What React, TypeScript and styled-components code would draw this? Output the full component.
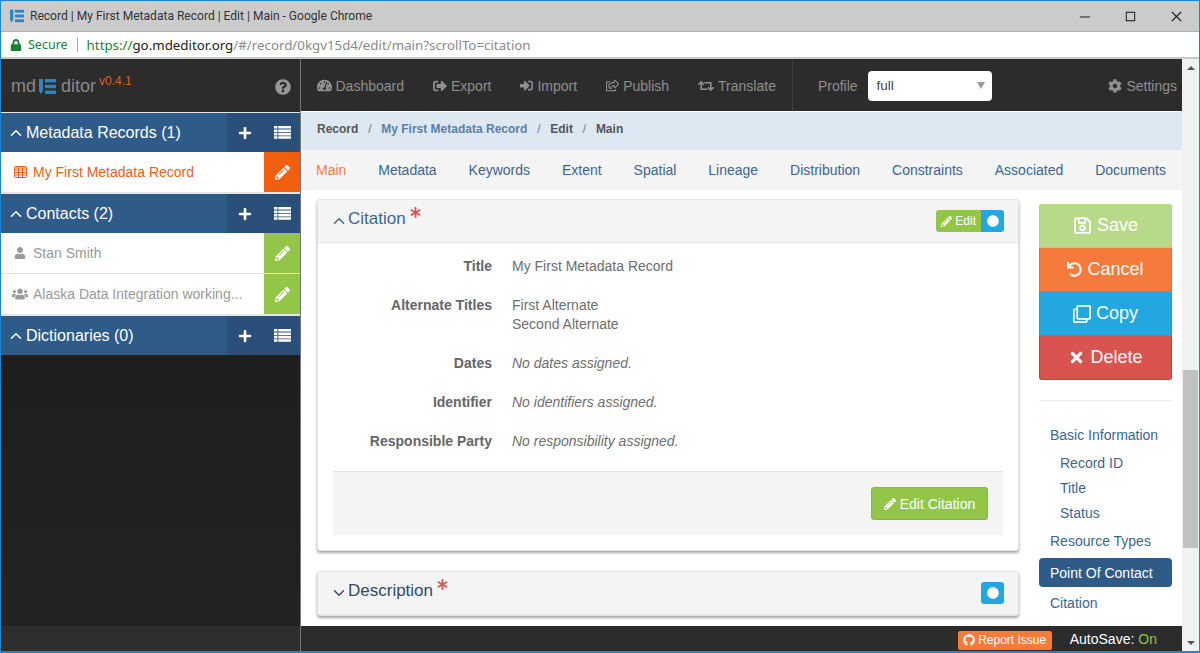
import { createGlobalStyle } from "styled-components";
import styled from "styled-components";
import {
  FaAsterisk, FaCircle, FaCog, FaGithub, FaLock, FaPencilAlt, FaPlus,
  FaQuestionCircle, FaRegClone, FaRegSave, FaRegShareSquare, FaRetweet, FaSignInAlt, FaSignOutAlt,
  FaTachometerAlt, FaTimes, FaUndo, FaUser, FaUsers,
} from "react-icons/fa";
import { VscChromeClose, VscChromeMaximize, VscChromeMinimize } from "react-icons/vsc";
import { ChevronDown, ChevronUp } from "lucide-react";
import type { ReactNode } from "react";

const GlobalStyle = createGlobalStyle`
  * { box-sizing: border-box; }
  html, body { margin: 0; height: 100%; overflow: hidden; }
  body { font-family: "Liberation Sans", Arial, sans-serif; font-size: 14px; color: #555; }
`;

const BLUE = "#2e5b88";
const GREEN = "#93c648";

const Win = styled.div`
  width: 1200px;
  height: 653px;
  display: flex;
  flex-direction: column;
  border: 1px solid #1a86d6;
  border-bottom-width: 2px;
  background: #fff;
  overflow: hidden;
`;

const TitleBar = styled.div`
  height: 31px;
  flex: none;
  background: #cbcbcb;
  border-bottom: 1px solid #b0b0b0;
  display: flex;
  align-items: center;
  padding-left: 9px;
  font-family: Roboto, sans-serif;
  font-size: 12.05px;
  color: #333;
`;
const TitleText = styled.span`
  margin-left: 6px;
  flex: 1;
`;
const WinBtn = styled.span`
  width: 46px;
  display: flex;
  justify-content: center;
  font-size: 15px;
  color: #111;
`;

const AddressBar = styled.div`
  height: 27px;
  flex: none;
  background: #fff;
  border-bottom: 2px solid #c8c8c8;
  display: flex;
  align-items: center;
  padding-left: 9px;
  font-family: "Noto Sans", sans-serif;
  font-size: 13.3px;
  color: #8a8a8a;
  svg { color: #188038; font-size: 12px; }
`;
const Secure = styled.span`
  color: #188038;
  margin-left: 6px;
  padding-right: 9px;
  margin-right: 9px;
  border-right: 1px solid #aaa;
  line-height: 15px;
  font-size: 12.5px;
`;
const Scheme = styled.span`
  color: #188038;
`;
const Host = styled.span`
  color: #222;
`;

const Body = styled.div`
  flex: 1;
  min-height: 0;
  display: flex;
`;

const Sidebar = styled.aside`
  width: 300px;
  flex: none;
  background: linear-gradient(#1a1a1a, #232323);
  display: flex;
  flex-direction: column;
  border-right: 1px solid #777;
`;
const Brand = styled.div`
  height: 53px;
  flex: none;
  background: #2c2c2c;
  padding: 2px 9px 0 10px;
  display: flex;
  align-items: center;
  color: #8a8a8a;
  font-size: 18px;
`;
const BrandLogo = styled.span`
  display: flex;
  margin: 0 5px 0 3px;
`;
const Version = styled.sup`
  color: #d2691e;
  font-size: 12px;
  margin-left: 3px;
  position: relative;
  top: -6px;
  line-height: 0;
`;
const Help = styled.span`
  margin-left: auto;
  font-size: 16px;
  color: #999;
  display: flex;
`;
const SectionHead = styled.div`
  height: 40px;
  flex: none;
  border-top: 1px solid #dfe6ee;
  background: ${BLUE};
  color: #fff;
  display: flex;
  align-items: center;
  font-size: 16px;
  padding-left: 6px;
`;
const SectionTitle = styled.span`
  flex: 1;
  display: flex;
  align-items: center;
  gap: 1px;
`;
const SectionActions = styled.div`
  width: 73px;
  height: 100%;
  background: #2a4f78;
  display: flex;
  align-items: center;
  justify-content: space-between;
  padding: 0 9px 0 11px;
  font-size: 14px;
`;
const Item = styled.div<{ $active?: boolean }>`
  height: 41px;
  flex: none;
  background: #fff;
  display: flex;
  align-items: center;
  padding-left: 12px;
  font-size: 14px;
  color: ${(p) => (p.$active ? "#e8601c" : "#9a9a9a")};
  border-bottom: 1px solid #e4e4e4;
`;
const ItemIcon = styled.span`
  width: 14px;
  display: flex;
  justify-content: center;
`;
const ItemLabel = styled.span`
  flex: 1;
  margin-left: 6px;
`;
const ItemEdit = styled.span<{ $bg: string }>`
  width: 36px;
  height: 40px;
  background: ${(p) => p.$bg};
  color: #fff;
  display: flex;
  align-items: center;
  justify-content: center;
  font-size: 15px;
`;
const SidebarFill = styled.div`
  flex: 1;
`;
const SidebarFoot = styled.div`
  height: 25px;
  flex: none;
  background: #2e2e2e;
`;

const Main = styled.main`
  flex: 1;
  min-width: 0;
  display: flex;
`;
const MainColumn = styled.div`
  flex: 1;
  min-width: 0;
  display: flex;
  flex-direction: column;
`;
const TopNav = styled.nav`
  height: 53px;
  flex: none;
  background: #2c2c2c;
  border-bottom: 1px solid #fff;
  display: flex;
  align-items: center;
  padding: 1px 0 0 15.5px;
  color: #8f8f8f;
  font-size: 14px;
`;
const NavLinkItem = styled.a`
  display: flex;
  align-items: center;
  gap: 4px;
  margin-right: 29px;
`;
const NavDivider = styled.span`
  width: 1px;
  height: 51px;
  background: #3f3f3f;
  margin-left: -13px;
  margin-right: 25px;
`;
const ProfileSelect = styled.div`
  width: 124px;
  height: 30px;
  margin-left: 10px;
  border-radius: 4px;
  background: #fff;
  color: #444;
  font-size: 13.5px;
  display: flex;
  align-items: center;
  justify-content: space-between;
  padding: 0 7px 0 9px;
`;
const Caret = styled.span`
  width: 0;
  height: 0;
  border-left: 4px solid transparent;
  border-right: 4px solid transparent;
  border-top: 7px solid #999;
`;
const Settings = styled(NavLinkItem)`
  margin: 0 0 0 auto;
  padding-right: 5px;
`;

const Crumbs = styled.div`
  height: 38px;
  flex: none;
  background: #dde8f3;
  display: flex;
  align-items: center;
  padding: 0 0 5px 16px;
  font-size: 12px;
  font-weight: bold;
  color: #555;
`;
const CrumbLink = styled.span`
  color: #5b7fa4;
`;
const CrumbSep = styled.span`
  font-weight: normal;
  color: #777;
  margin: 0 9.8px;
`;
const Tabs = styled.div`
  height: 40px;
  flex: none;
  background: #f4f4f4;
  display: flex;
  align-items: center;
  justify-content: space-between;
  padding: 0 16px 0 15px;
  font-size: 14px;
  color: #3c6690;
  border-bottom: 1px solid #eee;
`;
const Tab = styled.span<{ $active?: boolean }>`
  color: ${(p) => (p.$active ? "#f47b3c" : "inherit")};
`;
const Content = styled.div`
  flex: 1;
  min-height: 0;
  display: flex;
  background: #fff;
  padding-left: 16px;
  overflow: hidden;
`;
const Cards = styled.div`
  width: 702px;
  flex: none;
  padding-top: 9px;
  display: flex;
  flex-direction: column;
  gap: 20px;
`;
const Card = styled.section`
  background: #fff;
  border: 1px solid #e3e3e3;
  border-radius: 3px;
  box-shadow: 0 2px 3px rgba(0, 0, 0, 0.35);
`;
const CardHead = styled.header`
  height: 43px;
  background: #f4f4f4;
  border-bottom: 1px solid #e6e6e6;
  display: flex;
  align-items: center;
  padding: 0 14px 0 12px;
  color: #3c6690;
  font-size: 17px;
`;
const CardTitle = styled.span<{ $dark?: boolean }>`
  margin-top: -4px;
  color: ${(p) => (p.$dark ? "#2f4a6b" : "#3c6690")};
`;
const Star = styled.span`
  color: #d9534f;
  font-size: 11px;
  margin: -18px auto 0 4px;
  display: flex;
`;
const MiniEdit = styled.span`
  height: 22px;
  background: ${GREEN};
  color: #fff;
  font-size: 12px;
  padding: 0 5px;
  display: flex;
  align-items: center;
  gap: 3px;
  border-radius: 3px 0 0 3px;
  svg { font-size: 11px; }
`;
const Dot = styled.span<{ $solo?: boolean }>`
  width: 23px;
  height: 22px;
  background: #22a7e0;
  color: #fff;
  font-size: 12px;
  display: flex;
  align-items: center;
  justify-content: center;
  border-radius: ${(p) => (p.$solo ? "3px" : "0 3px 3px 0")};
`;
const CardBody = styled.div`
  padding: 14px 15px 15px;
`;
const Fields = styled.dl`
  margin: 0;
  display: grid;
  grid-template-columns: 159px 1fr;
  column-gap: 20px;
  row-gap: 20px;
  line-height: 19px;
  font-size: 14px;
`;
const Term = styled.dt`
  font-weight: bold;
  text-align: right;
  color: #666;
`;
const Def = styled.dd<{ $empty?: boolean }>`
  margin: 0;
  color: #6e6e6e;
  font-style: ${(p) => (p.$empty ? "italic" : "normal")};
`;
const CardFoot = styled.div`
  margin-top: 20px;
  height: 64px;
  background: #f4f4f4;
  border-top: 1px solid #e3e3e3;
  display: flex;
  align-items: center;
  justify-content: flex-end;
  padding-right: 15px;
`;
const EditCitation = styled.span`
  height: 33px;
  width: 117px;
  background: ${GREEN};
  border: 1px solid #86b83f;
  border-radius: 3px;
  color: #fff;
  display: flex;
  align-items: center;
  justify-content: center;
  gap: 4px;
  font-size: 14px;
  svg { font-size: 12px; }
`;

const Rail = styled.div`
  width: 133px;
  margin-left: 20px;
  padding-top: 14px;
  flex: none;
`;
const ActionStack = styled.div`
  display: flex;
  flex-direction: column;
`;
const ActionBtn = styled.div<{ $bg: string; $edge: string }>`
  height: 44px;
  background: ${(p) => p.$bg};
  border: 1px solid ${(p) => p.$edge};
  border-top-width: 0;
  color: #fff;
  font-size: 18px;
  display: flex;
  align-items: center;
  justify-content: center;
  gap: 5px;
  &:first-child { border-radius: 3px 3px 0 0; }
  &:last-child { border-radius: 0 0 3px 3px; }
`;
const Rule = styled.hr`
  border: 0;
  border-top: 1px solid #eee;
  margin: 20px 0 18px;
`;
const RailNav = styled.div`
  display: flex;
  flex-direction: column;
  color: #3c6690;
  font-size: 14px;
`;
const RailLink = styled.div<{ $sub?: boolean }>`
  height: ${(p) => (p.$sub ? "25px" : "31px")};
  padding-left: ${(p) => (p.$sub ? "21px" : "11px")};
  display: flex;
  align-items: center;
`;
const RailLinkActive = styled(RailLink)`
  height: 29px;
  margin-top: 2px;
  border-radius: 4px;
  background: ${BLUE};
  color: #fff;
`;

const Scrollbar = styled.div`
  width: 17px;
  flex: none;
  background: #f1f1f1;
  display: flex;
  flex-direction: column;
  align-items: center;
`;
const ScrollArrow = styled.span<{ $up?: boolean }>`
  width: 0;
  height: 0;
  margin: ${(p) => (p.$up ? "7px 0 0" : "0 0 6px")};
  border-left: 4px solid transparent;
  border-right: 4px solid transparent;
  ${(p) => (p.$up ? "border-bottom: 4px solid #555;" : "border-top: 4px solid #555;")}
`;
const ScrollThumb = styled.div`
  width: 15px;
  height: 178px;
  margin-top: auto;
  margin-bottom: 93px;
  background: #c1c1c1;
`;

const Footer = styled.footer`
  height: 25px;
  flex: none;
  background: #2c2c2c;
  display: flex;
  align-items: center;
  justify-content: flex-end;
  padding-right: 25px;
  color: #fff;
  font-size: 14px;
`;
const Report = styled.span`
  height: 19px;
  width: 94px;
  margin: 3px 18px 0 0;
  background: #f47b3c;
  border-radius: 2px;
  font-size: 12px;
  display: flex;
  align-items: center;
  justify-content: center;
  gap: 3px;
`;
const On = styled.span`
  color: #93c648;
  margin-left: 4px;
`;

// app logo: a pencil standing next to three bars
function Logo({ size }: { size: number }) {
  return (
    <svg width={size} height={size} viewBox="0 0 17 17" fill="#2a86c4">
      <path d="M0 1h4v12l-2 3-2-3z" />
      <rect x="6" y="1" width="11" height="3.4" />
      <rect x="6" y="6.8" width="11" height="3.4" />
      <rect x="6" y="12.6" width="11" height="3.4" />
    </svg>
  );
}

// the fa 4 list glyph: stacked bars with a thin notch on the left
function RowsIcon() {
  return (
    <svg width="17" height="13" viewBox="0 0 17 13" fill="#fff">
      <path d="M0 0h3.5v2.6H0zM4.3 0H17v2.6H4.3zM0 3.4h3.5V6H0zM4.3 3.4H17V6H4.3zM0 6.8h3.5v2.6H0zM4.3 6.8H17v2.6H4.3zM0 10.2h3.5v2.6H0zM4.3 10.2H17v2.6H4.3z" />
    </svg>
  );
}

function GridIcon() {
  return (
    <svg width="13" height="12" viewBox="0 0 13 12" fill="none" stroke="currentColor" strokeWidth="1">
      <rect x="0.5" y="0.5" width="12" height="11" rx="1" />
      <path d="M0 4h13M0 6.500h13M0 9h13M4.500 2v10M8.500 2v10M0 2h13" />
    </svg>
  );
}

function Section({ title, children }: { title: string; children?: ReactNode }) {
  return (
    <>
      <SectionHead>
        <SectionTitle><ChevronUp size={18} strokeWidth={2} />{title}</SectionTitle>
        <SectionActions><FaPlus /><RowsIcon /></SectionActions>
      </SectionHead>
      {children}
    </>
  );
}

export default function App() {
  return (
    <>
      <GlobalStyle />
      <Win>
        <TitleBar>
          <Logo size={14} />
          <TitleText>Record | My First Metadata Record | Edit | Main - Google Chrome</TitleText>
          <WinBtn><VscChromeMinimize /></WinBtn>
          <WinBtn><VscChromeMaximize /></WinBtn>
          <WinBtn><VscChromeClose /></WinBtn>
        </TitleBar>
        <AddressBar>
          <FaLock />
          <Secure>Secure</Secure>
          <Scheme>https://</Scheme><Host>go.mdeditor.org</Host>/#/record/0kgv15d4/edit/main?scrollTo=citation
        </AddressBar>
        <Body>
          <Sidebar>
            <Brand>
              md<BrandLogo><Logo size={17} /></BrandLogo>ditor<Version>v0.4.1</Version>
              <Help><FaQuestionCircle /></Help>
            </Brand>
            <Section title="Metadata Records (1)">
              <Item $active>
                <ItemIcon><GridIcon /></ItemIcon>
                <ItemLabel>My First Metadata Record</ItemLabel>
                <ItemEdit $bg="#f05e0e"><FaPencilAlt /></ItemEdit>
              </Item>
            </Section>
            <Section title="Contacts (2)">
              <Item>
                <ItemIcon><FaUser size={12} /></ItemIcon>
                <ItemLabel>Stan Smith</ItemLabel>
                <ItemEdit $bg={GREEN}><FaPencilAlt /></ItemEdit>
              </Item>
              <Item>
                <ItemIcon><FaUsers size={16} style={{ flex: "none" }} /></ItemIcon>
                <ItemLabel>Alaska Data Integration working...</ItemLabel>
                <ItemEdit $bg={GREEN}><FaPencilAlt /></ItemEdit>
              </Item>
            </Section>
            <Section title="Dictionaries (0)" />
            <SidebarFill />
            <SidebarFoot />
          </Sidebar>
          <Main>
            <MainColumn>
              <TopNav>
                <NavLinkItem><FaTachometerAlt size={15} />Dashboard</NavLinkItem>
                <NavLinkItem><FaSignOutAlt size={14} />Export</NavLinkItem>
                <NavLinkItem><FaSignInAlt size={13} />Import</NavLinkItem>
                <NavLinkItem><FaRegShareSquare size={13} />Publish</NavLinkItem>
                <NavLinkItem><FaRetweet size={16} />Translate</NavLinkItem>
                <NavDivider />
                Profile
                <ProfileSelect>full<Caret /></ProfileSelect>
                <Settings><FaCog size={14} />Settings</Settings>
              </TopNav>
              <Crumbs>
                Record<CrumbSep>/</CrumbSep>
                <CrumbLink>My First Metadata Record</CrumbLink><CrumbSep>/</CrumbSep>
                Edit<CrumbSep>/</CrumbSep>Main
              </Crumbs>
              <Tabs>
                <Tab $active>Main</Tab>
                {["Metadata", "Keywords", "Extent", "Spatial", "Lineage", "Distribution", "Constraints", "Associated", "Documents"].map((t) => (
                  <Tab key={t}>{t}</Tab>
                ))}
              </Tabs>
              <Content>
                <Cards>
                  <Card>
                    <CardHead>
                      <ChevronUp size={18} strokeWidth={1.8} />
                      <CardTitle>Citation</CardTitle>
                      <Star><FaAsterisk /></Star>
                      <MiniEdit><FaPencilAlt />Edit</MiniEdit>
                      <Dot><FaCircle /></Dot>
                    </CardHead>
                    <CardBody>
                      <Fields>
                        <Term>Title</Term><Def>My First Metadata Record</Def>
                        <Term>Alternate Titles</Term><Def>First Alternate<br />Second Alternate</Def>
                        <Term>Dates</Term><Def $empty>No dates assigned.</Def>
                        <Term>Identifier</Term><Def $empty>No identifiers assigned.</Def>
                        <Term>Responsible Party</Term><Def $empty>No responsibility assigned.</Def>
                      </Fields>
                      <CardFoot><EditCitation><FaPencilAlt />Edit Citation</EditCitation></CardFoot>
                    </CardBody>
                  </Card>
                  <Card>
                    <CardHead>
                      <ChevronDown size={18} strokeWidth={1.8} color="#2f4a6b" />
                      <CardTitle $dark>Description</CardTitle>
                      <Star><FaAsterisk /></Star>
                      <Dot $solo><FaCircle /></Dot>
                    </CardHead>
                  </Card>
                </Cards>
                <Rail>
                  <ActionStack>
                    <ActionBtn $bg="#b9d98a" $edge="#b0d27e"><FaRegSave size={19} />Save</ActionBtn>
                    <ActionBtn $bg="#f47b3c" $edge="#ee6c2a"><FaUndo size={15} />Cancel</ActionBtn>
                    <ActionBtn $bg="#22a7e0" $edge="#1f9dd3"><FaRegClone size={18} />Copy</ActionBtn>
                    <ActionBtn $bg="#d9534f" $edge="#c9403c"><FaTimes size={17} />Delete</ActionBtn>
                  </ActionStack>
                  <Rule />
                  <RailNav>
                    <RailLink>Basic Information</RailLink>
                    <RailLink $sub>Record ID</RailLink>
                    <RailLink $sub>Title</RailLink>
                    <RailLink $sub>Status</RailLink>
                    <RailLink>Resource Types</RailLink>
                    <RailLinkActive>Point Of Contact</RailLinkActive>
                    <RailLink>Citation</RailLink>
                  </RailNav>
                </Rail>
              </Content>
              <Footer>
                <Report><FaGithub size={12} />Report Issue</Report>
                AutoSave:<On>On</On>
              </Footer>
            </MainColumn>
            <Scrollbar>
              <ScrollArrow $up />
              <ScrollThumb />
              <ScrollArrow />
            </Scrollbar>
          </Main>
        </Body>
      </Win>
    </>
  );
}
